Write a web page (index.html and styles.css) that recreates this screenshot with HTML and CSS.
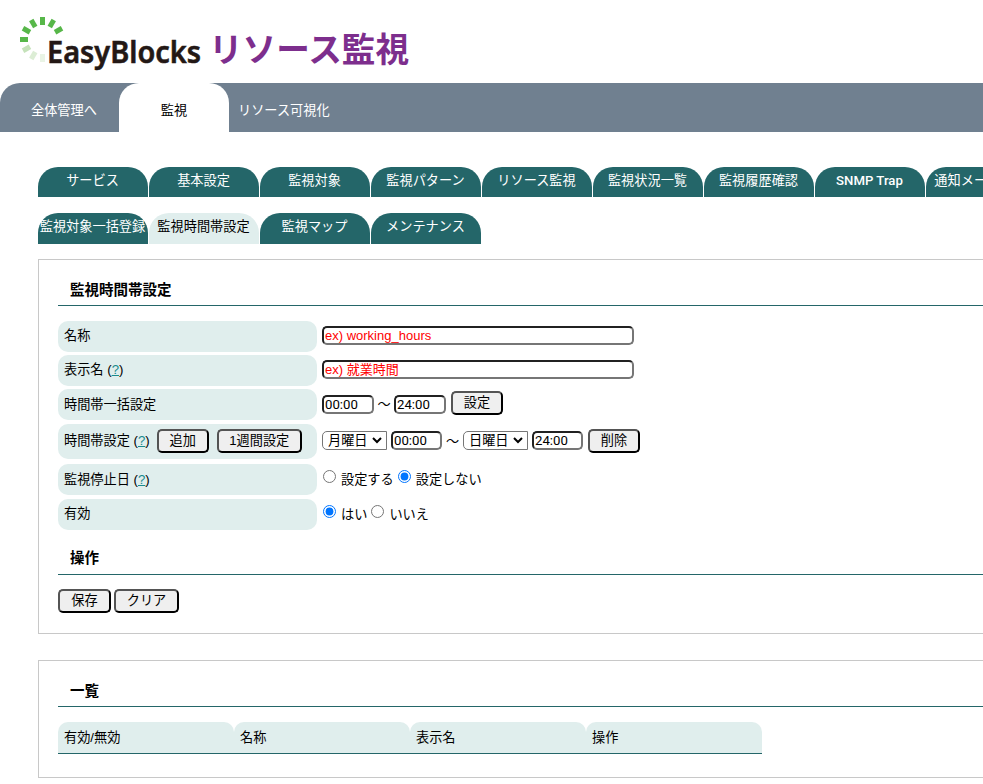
FILE: index.html
```html
<!DOCTYPE html>
<html lang="ja">
<head>
<meta charset="utf-8">
<title>EasyBlocks リソース監視</title>
<link rel="stylesheet" href="styles.css">
</head>
<body>
<header class="brand">
<svg class="logo" width="430" height="83" viewBox="0 0 430 83" role="img">
<g transform="translate(42.5 39.5)" fill="#57b749">
<rect x="-2.5" y="-22.5" width="5" height="8"/>
<rect x="-2.5" y="-22.5" width="5" height="8" transform="rotate(30)"/>
<rect x="-2.5" y="-22.5" width="5" height="8" transform="rotate(60)"/>
<rect x="-2.5" y="-22.5" width="5" height="8" transform="rotate(-30)"/>
<rect x="-2.5" y="-22.5" width="5" height="8" transform="rotate(-60)"/>
<rect x="-2.5" y="-22.5" width="5" height="8" transform="rotate(-90)"/>
<rect x="-2.5" y="-22.5" width="5" height="8" transform="rotate(-120)" fill="#c5e2ba"/>
<rect x="-2.5" y="-22.5" width="5" height="8" transform="rotate(-150)" fill="#dcedd5"/>
<rect x="-2.5" y="-22.5" width="5" height="8" transform="rotate(180)" fill="#e9f4e5"/>
</g>
<text class="logo-name" x="47" y="63" textLength="154" lengthAdjust="spacingAndGlyphs">EasyBlocks</text>
<text class="logo-product" x="209" y="62" textLength="200" lengthAdjust="spacingAndGlyphs">リソース監視</text>
</svg>
</header>
<nav class="main-nav">
<a class="main-tab first">全体管理へ</a><a class="main-tab current">監視</a><a class="main-tab">リソース可視化</a>
</nav>
<nav class="sub-nav">
<div class="tabs"><a class="tab">サービス</a><a class="tab">基本設定</a><a class="tab">監視対象</a><a class="tab">監視パターン</a><a class="tab">リソース監視</a><a class="tab">監視状況一覧</a><a class="tab">監視履歴確認</a><a class="tab latin">SNMP Trap</a><a class="tab">通知メール設定</a></div>
<div class="tabs second"><a class="tab">監視対象一括登録</a><a class="tab current">監視時間帯設定</a><a class="tab">監視マップ</a><a class="tab">メンテナンス</a></div>
</nav>
<main>
<section class="panel settings">
<h2>監視時間帯設定</h2>
<div class="form">
<div class="row"><div class="label">名称</div><div class="field"><input class="wide" placeholder="ex) working_hours"></div></div>
<div class="row"><div class="label">表示名 (<a class="help">?</a>)</div><div class="field"><input class="wide" placeholder="ex) 就業時間"></div></div>
<div class="row gap"><div class="label">時間帯一括設定</div><div class="field"><input class="time" value="00:00"><span class="tilde">～</span><input class="time" value="24:00"><button class="after">設定</button></div></div>
<div class="row tall"><div class="label">時間帯設定 (<a class="help">?</a>)<button class="add">追加</button><button class="week">1週間設定</button></div><div class="field"><span class="day">月曜日<svg width="10" height="7" viewBox="0 0 10 7"><path d="M1 1L5 5L9 1"/></svg></span><input class="time short" value="00:00"><span class="tilde">～</span><span class="day">日曜日<svg width="10" height="7" viewBox="0 0 10 7"><path d="M1 1L5 5L9 1"/></svg></span><input class="time short" value="24:00"><button class="after">削除</button></div></div>
<div class="row gap"><div class="label">監視停止日 (<a class="help">?</a>)</div><div class="field radios"><input type="radio" name="stop"><span>設定する</span><input type="radio" name="stop" checked><span>設定しない</span></div></div>
<div class="row last"><div class="label">有効</div><div class="field radios"><input type="radio" name="on" checked><span>はい</span><input type="radio" name="on"><span>いいえ</span></div></div>
</div>
<h2 class="actions-title">操作</h2>
<div class="actions"><button class="save">保存</button><button class="clear">クリア</button></div>
</section>
<section class="panel list">
<h2>一覧</h2>
<div class="list-head"><span>有効/無効</span><span>名称</span><span>表示名</span><span>操作</span></div>
</section>
</main>
</body>
</html>
```
FILE: styles.css
```css
* { box-sizing: border-box; }
html { overflow: hidden; }
body {
  margin: 0;
  height: 784px;
  overflow: hidden;
  background: #fff;
  color: #000;
  font: 13.2px/20px "Liberation Sans", "Noto Sans CJK JP", sans-serif;
}
.brand { height: 83px; }
.logo { display: block; }
.logo-name { font: 600 31px "Noto Sans", sans-serif; fill: #231815; stroke: #231815; stroke-width: .6px; }
.logo-product { font: 700 34px "Noto Sans CJK JP", sans-serif; fill: #7d2e8d; }

.main-nav {
  display: flex;
  height: 49px;
  background: #708090;
  border-top-left-radius: 20px;
  color: #fff;
}
.main-tab { padding: 18px 9px 0; white-space: nowrap; }
.main-tab.first { width: 119px; padding-left: 31px; }
.main-tab.current {
  width: 110px;
  padding-left: 0;
  padding-right: 0;
  text-align: center;
  background: #fff;
  color: #000;
  border-radius: 20px 20px 0 0;
}

.sub-nav { padding: 35px 0 0 38px; overflow: hidden; }
.tabs { display: flex; gap: 1px; height: 30px; }
.tabs.second { height: 31px; margin-top: 16px; }
.tab {
  flex: 0 0 110px;
  padding: 4px 1px 0 0;
  text-align: center;
  white-space: nowrap;
  background: #246669;
  color: #fff;
  border-radius: 20px 20px 0 0;
}
.tab.current { background: #e0eeed; color: #000; }
.tab.latin { font-family: Roboto, sans-serif; font-weight: 500; }

main { padding: 15px 0 0 38px; }
.panel { border: 1px solid #c8c8c8; border-right: 0; padding-left: 19px; }
.settings { height: 375px; }
.list { height: 118px; margin-top: 26px; }
h2 {
  margin: 0;
  height: 46px;
  padding: 20px 0 0 12px;
  border-bottom: 1px solid #246669;
  font-size: 14.5px;
  line-height: 20px;
  font-weight: 700;
}

.form { padding-top: 15px; }
.row { display: flex; height: 31px; margin-bottom: 3px; }
.row.gap { margin-bottom: 4px; }
.row.tall { height: 35px; margin-bottom: 5px; }
.row.last { margin-bottom: 0; }
.label {
  display: flex;
  align-items: center;
  width: 259px;
  padding: 0 0 1px 6px;
  background: #e0eeed;
  border-radius: 10px;
  white-space: pre;
}
.row.gap .label { padding-bottom: 0; }
.help { color: #188a8d; text-decoration: underline; }
.field { display: flex; align-items: center; padding: 0 0 2px 5px; }
.row.gap .field { padding-bottom: 1px; }
.row.tall .label, .row.tall .field { padding-bottom: 2px; }

input:not([type="radio"]) {
  height: 19px;
  margin: 0;
  padding: 1px;
  border: 2px inset #767676;
  border-radius: 5px;
  background: #fff;
  color: #000;
  font: 13.2px/15px Roboto, "Noto Sans CJK JP", sans-serif;
}
input.wide { width: 312px; }
.wide::placeholder { color: #f00; font: 13px/15px "Liberation Sans", "Noto Sans CJK JP", sans-serif; }
.time { width: 52px; }
input.time.short { width: 51px; margin-left: 4px; }
.tilde { width: 20px; text-align: center; position: relative; top: 1px; }
.time.short + .tilde { width: 21px; }
button {
  height: 24px;
  margin: 0;
  padding: 0 0 2px;
  border: 2px outset #000;
  border-radius: 5px;
  background: #efefef;
  color: #000;
  font: inherit;
}
.after { width: 52px; margin-left: 5px; position: relative; top: -1px; }
.row.tall .after { top: 0; }
.add { width: 52px; margin-left: 7px; }
.week { width: 85px; margin-left: 8px; }
.day {
  display: flex;
  align-items: center;
  width: 65px;
  height: 19px;
  padding-left: 5px;
  gap: 4px;
  border: 1px solid #767676;
  border-radius: 5px 0 0 5px;
}
.day svg { fill: none; stroke: #000; stroke-width: 2; }

.radios input { width: 13px; height: 13px; margin: -5px 5px 0 0; }
.radios span { margin-right: 4px; }
.radios input:first-child { margin-left: 1px; }
.radios span { position: relative; top: 1px; }
.actions-title { height: 45px; padding-top: 18px; }
.actions { display: flex; gap: 3px; padding-top: 14px; }
.save { width: 53px; }
.clear { width: 65px; }

.list-head { display: flex; margin-top: 15px; width: 704px; height: 32px; border-bottom: 1px solid #246669; }
.list-head span { width: 176px; padding: 6px 6px 0; background: #e0eeed; border-radius: 10px 10px 0 0; }
```
